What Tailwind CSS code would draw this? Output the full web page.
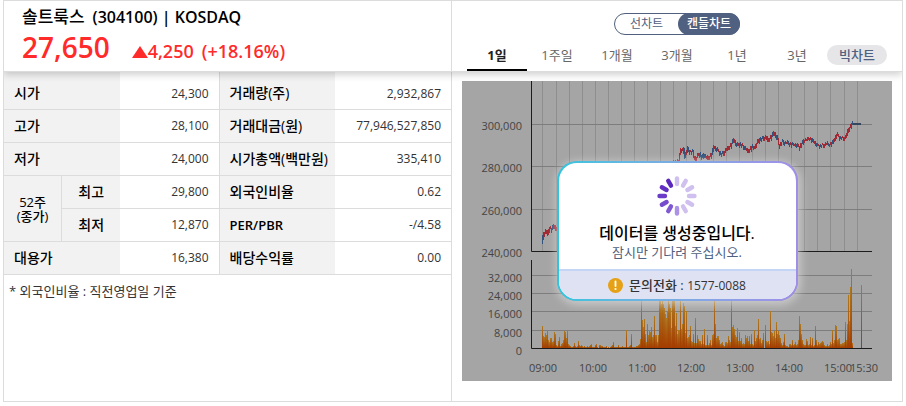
<!DOCTYPE html>
<html lang="ko">
<head>
<meta charset="utf-8">
<title>솔트룩스 (304100)</title>
<script src="https://cdn.jsdelivr.net/npm/@tailwindcss/browser@4"></script>
</head>
<body class="bg-white font-['Open_Sans','Noto_Sans_CJK_KR',sans-serif] text-[#333]">
<main class="mx-[3px] overflow-hidden border border-[#dcdcdc]">
  <header class="relative z-10 grid grid-cols-[447fr_451fr] border-b border-[#dcdcdc] bg-white shadow-[0_3px_7px_rgba(0,0,0,0.18)]">
    <div class="flex h-[70px] flex-col pl-[18px] pt-1 text-black">
      <h1 class="flex h-6 items-center gap-2 whitespace-nowrap text-base leading-6 font-semibold"><span class="text-[17px] font-medium">솔트룩스</span><span>(304100) | KOSDAQ</span></h1>
      <p class="flex items-baseline gap-[22px] leading-9 text-[#ff2b2b]"><strong class="text-[28px] font-semibold">27,650</strong><span class="flex items-baseline gap-2 text-lg leading-6 font-semibold"><span class="flex items-baseline"><svg class="h-3 w-4" viewBox="0 0 16 12" aria-label="상승"><path d="M8 0 16 12H0Z" fill="#ff2b2b"/></svg>4,250</span><span>(+18.16%)</span></span></p>
    </div>
    <div class="flex h-[70px] flex-col border-l border-[#dcdcdc] px-[15px] pt-3">
      <div class="mx-auto flex h-[22px] w-[126px] rounded-full border border-[#506080] text-xs leading-5 text-[#506080]">
        <button class="flex-1">선차트</button>
        <button class="-my-px -mr-px w-[62px] rounded-full bg-[#506080] font-medium text-white">캔들차트</button>
      </div>
      <nav class="mt-auto grid grid-cols-7 text-[13px] leading-5 text-[#666]">
        <button class="h-[30px] border-b-2 border-black font-bold text-[#222]">1일</button>
        <button class="h-[30px] border-b-2 border-transparent">1주일</button>
        <button class="h-[30px] border-b-2 border-transparent">1개월</button>
        <button class="h-[30px] border-b-2 border-transparent">3개월</button>
        <button class="h-[30px] border-b-2 border-transparent">1년</button>
        <button class="h-[30px] border-b-2 border-transparent">3년</button>
        <button class="mt-1 h-5 rounded-full bg-[#e6e6e8] font-medium text-[#506080]">빅차트</button>
      </nav>
    </div>
  </header>
  <div class="grid grid-cols-[447fr_451fr]">
    <section>
      <table class="w-full table-fixed border-separate border-spacing-0 text-xs [&_td]:border-b [&_td]:border-[#dcdcdc] [&_td]:pr-[10px] [&_td]:text-right [&_th]:border-b [&_th]:border-[#dcdcdc] [&_th]:bg-[#f2f2f2] [&_th]:p-0 [&_th]:text-sm [&_th]:leading-4 [&_th]:font-medium [&_th]:whitespace-nowrap [&_th]:text-black">
        <colgroup><col class="w-[13%]"><col class="w-[13%]"><col class="w-[22%]"><col class="w-[26%]"><col class="w-[26%]"></colgroup>
        <tbody>
          <tr class="h-[38px]"><th scope="row" colspan="2"><div class="pl-[10px] pt-1 text-left">시가</div></th><td class="pt-[6px]">24,300</td><th scope="row" class="border-l"><div class="pl-[10px] pt-1 text-left">거래량(주)</div></th><td class="pt-[6px]">2,932,867</td></tr>
          <tr class="h-[33px]"><th scope="row" colspan="2"><div class="pl-[10px] text-left">고가</div></th><td>28,100</td><th scope="row" class="border-l"><div class="pl-[10px] text-left">거래대금(원)</div></th><td>77,946,527,850</td></tr>
          <tr class="h-[33px]"><th scope="row" colspan="2"><div class="pl-[10px] text-left">저가</div></th><td>24,000</td><th scope="row" class="border-l"><div class="pl-[10px] text-left">시가총액(백만원)</div></th><td>335,410</td></tr>
          <tr class="h-[33px]"><th scope="rowgroup" rowspan="2" class="border-r"><div class="text-[13px] leading-[14px]">52주<br>(종가)</div></th><th scope="row">최고</th><td>29,800</td><th scope="row" class="border-l"><div class="pl-[10px] text-left">외국인비율</div></th><td>0.62</td></tr>
          <tr class="h-[33px]"><th scope="row">최저</th><td>12,870</td><th scope="row" class="border-l"><div class="pl-[10px] text-left text-[13px] font-semibold">PER/PBR</div></th><td>-/4.58</td></tr>
          <tr class="h-[33px]"><th scope="row" colspan="2"><div class="pl-[10px] text-left">대용가</div></th><td>16,380</td><th scope="row" class="border-l"><div class="pl-[10px] text-left">배당수익률</div></th><td>0.00</td></tr>
        </tbody>
      </table>
      <p class="pl-[5px] pt-2 text-[13px] leading-4">* 외국인비율 : 직전영업일 기준</p>
    </section>
    <section class="border-l border-[#dcdcdc] px-[10px] pt-[9px] pb-5">
      <div class="relative">
        <svg class="block w-full bg-[#a5a5a5]" viewBox="0 0 430 300" role="img" aria-label="가격 및 거래량 차트">
          <defs><linearGradient id="vol" x1="0" y1="0" x2="0" y2="1"><stop offset="0" stop-color="#ae7a20"/><stop offset="1" stop-color="#a43c00"/></linearGradient></defs>
          <g stroke="#8e8e8e">
            <path d="M80.500 0V170M94.500 0V170M107.500 0V170M120.500 0V170M133.500 0V170M146.500 0V170M159.500 0V170M172.500 0V170M185.500 0V170M198.500 0V170M211.500 0V170M224.500 0V170M238.500 0V170M251.500 0V170M264.500 0V170M277.500 0V170M290.500 0V170M303.500 0V170M316.500 0V170M329.500 0V170M342.500 0V170M355.500 0V170M368.500 0V170M382.500 0V170M395.500 0V170"/>
            <path stroke="#7d7d7d" d="M70 43.500H410M70 85.500H410M70 128.500H410M70 194.500H410M70 212.500H410M70 230.500H410M70 249.500H410"/>
          </g>
          <g id="bars" fill="url(#vol)" shape-rendering="crispEdges"></g>
          <g id="price" shape-rendering="crispEdges"></g>
          <path fill="none" stroke="#1c1c1c" d="M69.500 0V170.500H410M69.500 179V267.500H410"/>
          <g font-size="11" fill="#444" text-anchor="end">
            <text x="60" y="49">300,000</text><text x="60" y="91">280,000</text><text x="60" y="134">260,000</text><text x="60" y="176">240,000</text>
            <text x="60" y="201">32,000</text><text x="60" y="219">24,000</text><text x="60" y="237">16,000</text><text x="60" y="256">8,000</text><text x="60" y="274">0</text>
          </g>
          <g font-size="11" fill="#444" text-anchor="middle">
            <text x="81" y="291">09:00</text><text x="131" y="291">10:00</text><text x="180" y="291">11:00</text><text x="229" y="291">12:00</text><text x="278" y="291">13:00</text><text x="327" y="291">14:00</text><text x="376" y="291">15:00</text><text x="402" y="291">15:30</text>
          </g>
        </svg>
        <div class="absolute inset-0 flex items-center justify-center">
          <div role="status" class="w-[241px] rounded-[20px] bg-gradient-to-r from-[#2fc5de] to-[#a08ee8] p-[2px] shadow-[1px_2px_8px_2px_rgba(225,225,225,0.6)]">
            <div class="overflow-hidden rounded-[18px] bg-white text-center">
              <svg class="mx-auto mt-[11px] block h-11 w-11" viewBox="-22 -22 44 44" stroke-width="4.400" stroke-linecap="round" aria-hidden="true">
                <g stroke="#d0c0ef"><path d="M0-12V-17.500"/><path d="M0-12V-17.500" transform="rotate(30)"/><path d="M0-12V-17.500" transform="rotate(60)"/><path d="M0-12V-17.500" transform="rotate(90)"/><path d="M0-12V-17.500" transform="rotate(120)"/><path d="M0-12V-17.500" transform="rotate(150)"/></g>
                <path stroke="#ac92e4" d="M0-12V-17.500" transform="rotate(180)"/>
                <path stroke="#8059d2" d="M0-12V-17.500" transform="rotate(210)"/>
                <path stroke="#774ccd" d="M0-12V-17.500" transform="rotate(240)"/>
                <path stroke="#6a3cc8" d="M0-12V-17.500" transform="rotate(270)"/>
                <path stroke="#6030c2" d="M0-12V-17.500" transform="rotate(300)"/>
                <path stroke="#5b28be" d="M0-12V-17.500" transform="rotate(330)"/>
              </svg>
              <p class="mt-[5px] text-base leading-5 font-medium text-black">데이터를 생성중입니다.</p>
              <p class="text-[13px] leading-[18px] text-[#506080]">잠시만 기다려 주십시오.</p>
              <div class="mt-2 flex h-[30px] items-center justify-center gap-[6px] border-t-2 border-[#c5d5f5] bg-[#dee2f3] text-[13px] leading-5">
                <svg class="h-[15px] w-[15px]" viewBox="0 0 15 15" aria-hidden="true"><circle cx="7.500" cy="7.500" r="7.500" fill="#e6a117"/><path d="M7.500 3.500V8" stroke="#fff" stroke-width="1.800" stroke-linecap="round"/><circle cx="7.500" cy="11" r="1.100" fill="#fff"/></svg>
                <span><span class="font-medium">문의전화 :</span> <span class="text-xs">1577-0088</span></span>
              </div>
            </div>
          </div>
        </div>
      </div>
    </section>
  </div>
</main>
<script>
const NS = 'http://www.w3.org/2000/svg';
const addRect = (parent, x, y, h, fill) => {
  const r = document.createElementNS(NS, 'rect');
  r.setAttribute('x', x); r.setAttribute('y', y);
  r.setAttribute('width', 1); r.setAttribute('height', h);
  if (fill) r.setAttribute('fill', fill);
  parent.appendChild(r);
};
// Volume per minute, starting at 09:00
const volume = [
22,12,11,15,13,18,8,6,10,10,6,7,16,14,3,2,7,11,2,4,
5,8,17,16,10,17,4,3,2,1,1,2,5,2,1,2,7,3,2,3,
2,1,2,1,1,2,1,2,3,4,1,1,1,3,4,1,0,3,3,2,
2,1,1,1,2,0,1,0,1,2,3,6,1,1,1,1,3,1,1,1,
2,1,1,1,18,1,1,2,3,14,1,1,1,1,2,2,3,4,9,50,
28,21,29,14,6,24,13,18,16,21,11,13,32,13,13,6,13,50,50,44,
50,44,40,34,30,37,50,44,40,20,50,50,50,22,35,14,18,18,50,19,
24,45,42,15,37,10,11,13,22,7,6,14,5,30,5,13,9,7,7,4,
13,4,19,3,3,13,3,5,8,3,13,14,50,24,10,12,12,8,4,5,
6,3,2,6,6,5,12,8,6,50,21,23,19,13,11,20,7,16,7,10,
4,5,4,13,10,12,7,12,4,14,4,3,18,7,10,13,29,9,10,5,
8,15,0,23,7,6,7,4,37,16,15,12,17,10,26,14,17,13,10,5,
3,6,14,3,2,2,1,4,4,3,8,3,4,6,3,4,8,32,24,14,
8,4,3,3,9,7,3,4,11,3,10,2,3,22,8,3,6,4,5,6,
7,6,3,2,2,4,2,3,6,4,18,5,8,23,22,8,9,10,4,4,
5,5,6,26,8,24,53,27,61,79,5];
const bars = document.getElementById('bars');
volume.forEach((v, i) => v && addRect(bars, 80 + i, 267 - v, v));
addRect(bars, 399, 204, 63);

const runs = [
[[80,163],[81,156],[82,152],[84,149],[86,152],[88,146],[90,148],[92,144],[94,147],[97,145]],
[[211,80],[217,80],[218,72],[219,68],[221,70],[222,67],[223,75],[224,72],[226,67],[228,70],[231,70],[232,75],[234,78],[236,74],[238,72],[240,76],[242,73],[244,75],[246,77],[248,75],[250,72],[252,65],[254,67],[256,69],[258,71],[260,73],[262,71],[264,68],[266,67],[268,65],[270,62],[272,58],[274,62],[276,64],[278,62],[280,64],[283,66],[286,70],[288,68],[290,65],[292,66],[294,64],[296,60],[298,57],[300,58],[302,56],[304,55],[306,58],[308,57],[310,54],[312,51],[314,54],[316,58],[317,63],[319,62],[321,60],[323,62],[326,61],[330,63],[334,63],[338,65],[340,62],[342,59],[345,58],[348,57],[352,60],[355,64],[358,64],[362,64],[364,62],[368,63],[371,61],[373,57],[375,53],[378,56],[382,57],[384,55],[386,50],[388,46],[390,42],[391,43],[399,43]]];
const price = document.getElementById('price');
for (const pts of runs) {
  for (let k = 0; k < pts.length - 1; k++) {
    const [x0, y0] = pts[k], [x1, y1] = pts[k + 1];
    for (let x = x0; x < x1; x++) {
      const a = y0 + (y1 - y0) * (x - x0) / (x1 - x0);
      const b = y0 + (y1 - y0) * (x + 1 - x0) / (x1 - x0);
      const flat = x >= 391;
      const jitter = flat ? 0 : (x * 7 % 5) / 2 - 1;
      const top = Math.round(Math.min(a, b) + jitter);
      const size = Math.round(Math.abs(b - a)) + (flat ? 2 : 2 + x * 3 % 4 / 2);
      const up = y1 < y0 ? x % 5 !== 0 : x % 4 === 0;
      addRect(price, x, top - 1, Math.round(size), flat ? '#36465c' : up ? '#a32a35' : '#31537d');
    }
  }
}
</script>
</body>
</html>
